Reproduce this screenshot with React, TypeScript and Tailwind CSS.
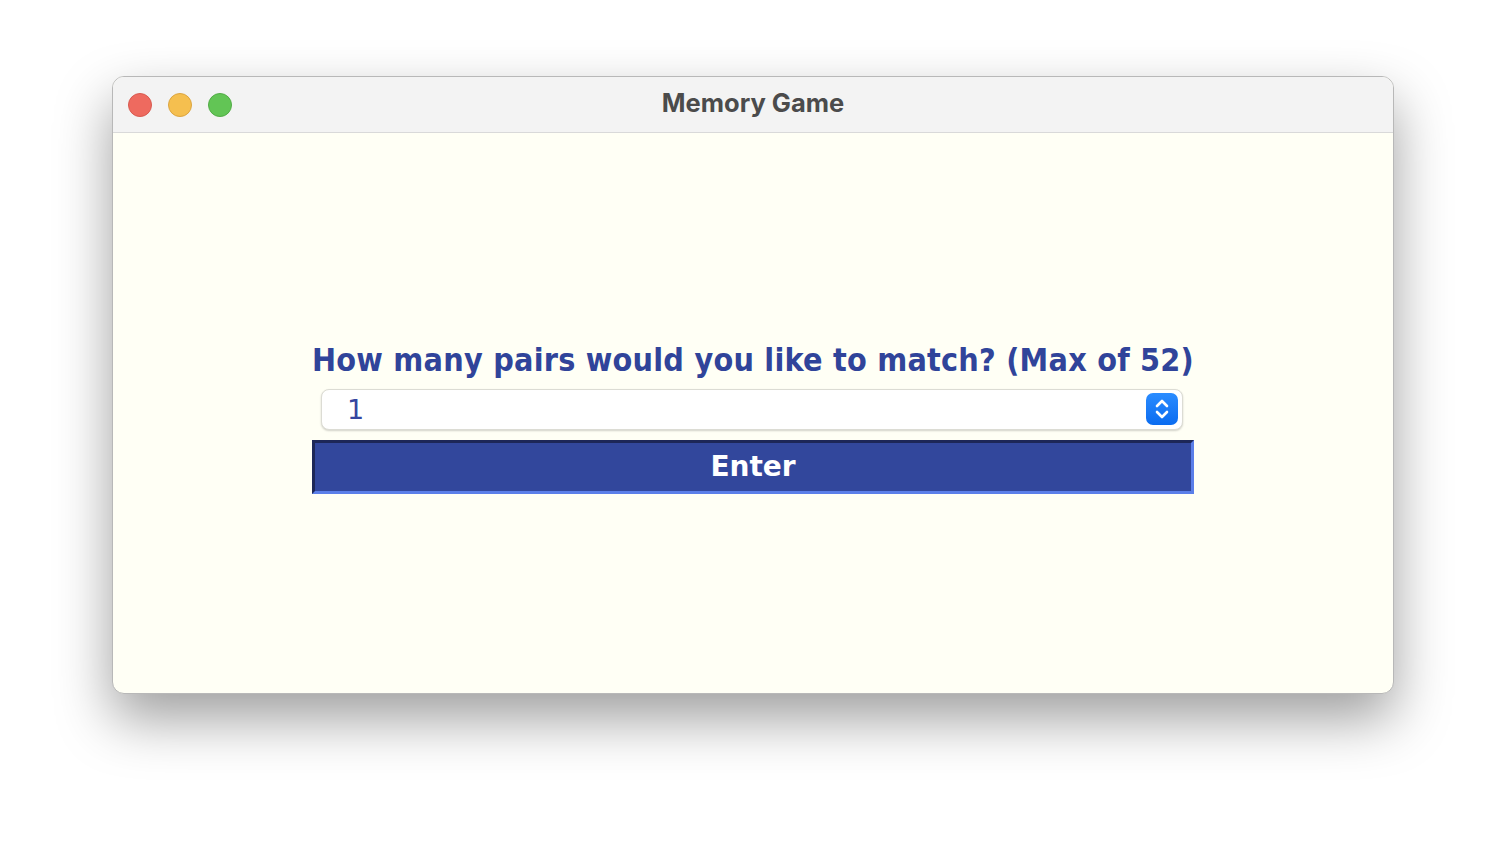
import React from "react";

export default function App() {
  return (
    <div className="w-[1506px] h-[842px] bg-white relative overflow-hidden">
      <div className="absolute left-[112px] top-[76px] w-[1282px] h-[618px] rounded-[12px] overflow-hidden border border-[#b8b8b8] shadow-[0_25px_55px_rgba(0,0,0,0.38)] flex flex-col bg-[#fffff5]">
        <div className="h-[56px] bg-[#f3f3f3] border-b border-[#d9d9d9] flex items-center relative shrink-0">
          <div className="flex items-center gap-[16px] pl-[15px]">
            <div className="w-[24px] h-[24px] rounded-full bg-[#ee6a5f] border border-[#d85a50]" />
            <div className="w-[24px] h-[24px] rounded-full bg-[#f5bf4f] border border-[#dca540]" />
            <div className="w-[24px] h-[24px] rounded-full bg-[#62c555] border border-[#52ac46]" />
          </div>
          <div
            className="absolute inset-0 flex items-center justify-center text-[25.5px] font-bold text-[#4b4b4b] pb-[2px]"
            style={{ fontFamily: "Inter, 'Noto Sans', sans-serif" }}
          >
            Memory Game
          </div>
        </div>
        <div className="flex-1 flex flex-col items-center justify-center pt-[8px]">
          <div className="w-[882px] flex flex-col">
            <div
              className="text-[#30449a] text-[32px] font-bold text-center leading-[38px] tracking-[0.22px] font-stretch-condensed whitespace-nowrap"
              style={{ fontFamily: "'DejaVu Sans Condensed', 'DejaVu Sans', Verdana, sans-serif" }}
            >
              How many pairs would you like to match? (Max of 52)
            </div>
            <div className="mt-[10px] ml-[9px] mr-[11px] h-[41px] rounded-[8px] bg-white border border-[#dcdcd4] shadow-[0_1px_2px_rgba(0,0,0,0.18)] flex items-center justify-between pl-[25px] pr-[4px]">
              <span
                className="text-[#3646a0] text-[27px] leading-none"
                style={{ fontFamily: "'DejaVu Sans', sans-serif" }}
              >
                1
              </span>
              <div className="w-[32px] h-[32px] rounded-[7px] bg-gradient-to-b from-[#2a8cff] to-[#0a6cf0] flex items-center justify-center">
                <svg width="18" height="26" viewBox="0 0 18 26" fill="none">
                  <path d="M4 10 L9 5 L14 10" stroke="white" strokeWidth="2.6" strokeLinecap="round" strokeLinejoin="round" />
                  <path d="M4 16 L9 21 L14 16" stroke="white" strokeWidth="2.6" strokeLinecap="round" strokeLinejoin="round" />
                </svg>
              </div>
            </div>
            <div className="mt-[10px] h-[54px] bg-[#32479c] border-[3px] border-t-[#1d2758] border-l-[#1d2758] border-b-[#5b7fe9] border-r-[#5b7fe9] flex items-center justify-center">
              <span
                className="text-white text-[28px] font-bold"
                style={{ fontFamily: "'DejaVu Sans', sans-serif" }}
              >
                Enter
              </span>
            </div>
          </div>
        </div>
      </div>
    </div>
  );
}
